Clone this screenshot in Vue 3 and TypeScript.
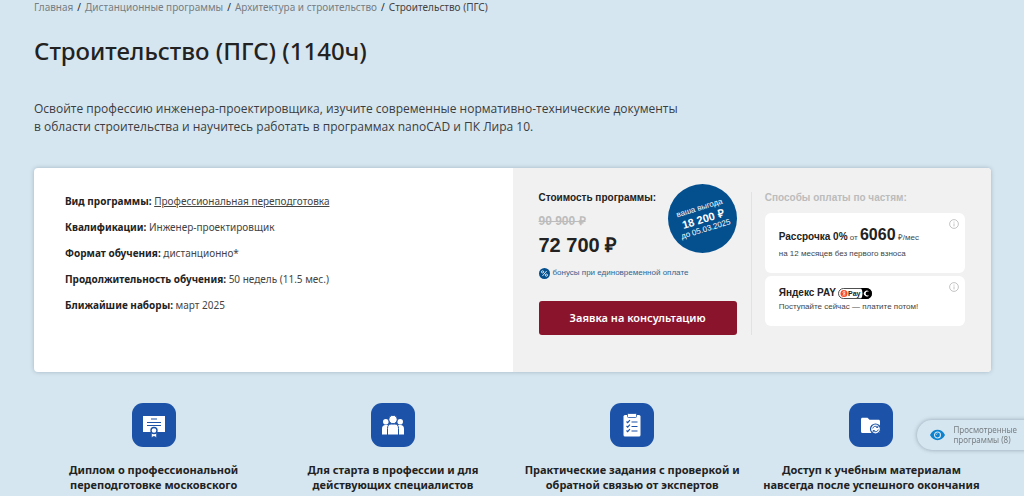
<script setup lang="ts">
interface Crumb { label: string; current?: boolean }
interface Fact { label: string; value: string; link?: boolean }
interface Feature { icon: 'diploma' | 'people' | 'tasks' | 'folder'; lines: string[] }

const crumbs: Crumb[] = [
  { label: 'Главная' },
  { label: 'Дистанционные программы' },
  { label: 'Архитектура и строительство' },
  { label: 'Строительство (ПГС)', current: true },
]

const facts: Fact[] = [
  { label: 'Вид программы:', value: 'Профессиональная переподготовка', link: true },
  { label: 'Квалификации:', value: 'Инженер-проектировщик' },
  { label: 'Формат обучения:', value: 'дистанционно*' },
  { label: 'Продолжительность обучения:', value: '50 недель (11.5 мес.)' },
  { label: 'Ближайшие наборы:', value: 'март 2025' },
]

const features: Feature[] = [
  { icon: 'diploma', lines: ['Диплом о профессиональной', 'переподготовке московского'] },
  { icon: 'people', lines: ['Для старта в профессии и для', 'действующих специалистов'] },
  { icon: 'tasks', lines: ['Практические задания с проверкой и', 'обратной связью от экспертов'] },
  { icon: 'folder', lines: ['Доступ к учебным материалам', 'навсегда после успешного окончания'] },
]
</script>

<template>
  <main class="page">
    <nav class="crumbs" aria-label="Навигация">
      <template v-for="(crumb, i) in crumbs" :key="crumb.label">
        <span v-if="i > 0" class="slash">/</span>
        <span v-if="crumb.current" class="current">{{ crumb.label }}</span>
        <a v-else href="#">{{ crumb.label }}</a>
      </template>
    </nav>

    <h1>Строительство (ПГС) (1140ч)</h1>
    <p class="lead">
      Освойте профессию инженера-проектировщика, изучите современные нормативно-технические документы<br>
      в области строительства и научитесь работать в программах nanoCAD и ПК Лира 10.
    </p>

    <section class="card">
      <div class="facts">
        <p v-for="fact in facts" :key="fact.label">
          <b>{{ fact.label }}</b>&nbsp;<a v-if="fact.link" href="#">{{ fact.value }}</a><span v-else>{{ fact.value }}</span>
        </p>
      </div>

      <div class="offer">
        <div class="price">
          <h2>Стоимость программы:</h2>
          <s>90 900 ₽</s>
          <strong class="total">72 700 ₽</strong>
          <div class="bonus">
            <svg viewBox="0 0 12 12" aria-hidden="true">
              <circle cx="6" cy="6" r="6" fill="#04508f" />
              <g fill="none" stroke="#e8f0f6" stroke-width="1">
                <path d="M8.4 3.2 3.7 8.8" />
                <circle cx="3.9" cy="4.2" r="1.2" />
                <circle cx="8.1" cy="7.8" r="1.2" />
              </g>
            </svg>
            <span>бонусы при единовременной оплате</span>
          </div>
          <button type="button" class="cta">Заявка на консультацию</button>
          <div class="badge">
            <div class="badge-text">
              <span>ваша выгода</span>
              <b>18 200 ₽</b>
              <span>до 05.03.2025</span>
            </div>
          </div>
        </div>

        <div class="parts">
          <h2>Способы оплаты по частям:</h2>
          <article class="part first">
            <p class="rate"><b>Рассрочка 0%</b> от <strong>6060</strong> ₽/мес</p>
            <p>на 12 месяцев без первого взноса</p>
            <button type="button" class="info" aria-label="Подробнее о рассрочке">
              <svg viewBox="0 0 10 10"><circle cx="5" cy="5" r="4.4" /><path d="M5 4.4v3M5 2.6v1" /></svg>
            </button>
          </article>
          <article class="part">
            <p class="pay">
              <b>Яндекс PAY</b>
              <svg class="pay-logo" viewBox="0 0 34 11" role="img" aria-label="Яндекс Pay">
                <rect x=".5" y=".5" width="33" height="10" rx="5" fill="#fff" stroke="#222" stroke-width=".8" />
                <path d="M23 0h5.5a5.5 5.5 0 0 1 0 11H23c2-3 2-8 0-11z" fill="#000" />
                <circle cx="6" cy="5.5" r="3.5" fill="#fc4822" />
                <path d="M6.8 7.8V3.3h-.7c-1.5 0-1.5 2.2 0 2.2h.7M6 5.5 4.9 7.8" fill="none" stroke="#fff" stroke-width=".7" />
                <text x="10" y="8" font-size="7" font-weight="700" fill="#222">Pay</text>
                <path d="M31 3.600a2.900 2.900 0 1 0 0 3.800h-1.500a1.900 1.900 0 0 1 0-3.800z" fill="#fff" />
                <circle cx="29.600" cy="5.500" r="1" fill="#000" />
              </svg>
            </p>
            <p>Поступайте сейчас — платите потом!</p>
            <button type="button" class="info" aria-label="Подробнее о Яндекс Pay">
              <svg viewBox="0 0 10 10"><circle cx="5" cy="5" r="4.4" /><path d="M5 4.4v3M5 2.6v1" /></svg>
            </button>
          </article>
        </div>
      </div>
    </section>

    <section class="features">
      <article v-for="feature in features" :key="feature.icon">
        <div class="tile">
          <svg v-if="feature.icon === 'diploma'" viewBox="0 0 44 44" aria-hidden="true">
            <rect x="11" y="13" width="22" height="16" fill="#fff" />
            <path d="M19 16h6M15 19.500h14M15 22.500h14" stroke="#1c53a8" stroke-width="1.200" />
            <path d="M19.500 28v6.500l2.500-1.200 2.500 1.200V28z" fill="#fff" stroke="#1c53a8" stroke-width=".6" />
            <circle cx="22" cy="27.500" r="3" fill="#fff" stroke="#1c53a8" stroke-width="1.400" />
          </svg>
          <svg v-else-if="feature.icon === 'people'" viewBox="0 0 44 44" aria-hidden="true" fill="#fff">
            <circle cx="14.800" cy="18.700" r="2.800" />
            <circle cx="29.200" cy="18.700" r="2.800" />
            <path d="M11 31.500V26c0-3 1.400-4 3.500-4H18v9.500zM33 31.500V26c0-3-1.400-4-3.500-4H26v9.500z" />
            <path d="M16.500 32V25.500c0-3.200 1.500-4.500 3.500-4.500h4c2 0 3.500 1.300 3.500 4.500V32z" stroke="#1c53a8" />
            <circle cx="22" cy="16.500" r="4.200" stroke="#1c53a8" />
          </svg>
          <svg v-else-if="feature.icon === 'tasks'" viewBox="0 0 44 44" aria-hidden="true">
            <rect x="13.500" y="12" width="17" height="21.500" rx="1.500" fill="#fff" />
            <rect x="17.500" y="10.500" width="9" height="4" rx="1" fill="#fff" stroke="#1c53a8" stroke-width=".8" />
            <path d="m16.500 18.500 1.200 1.200 2.200-2.600M16.500 23l1.200 1.200 2.200-2.600M16.500 27.500l1.200 1.200 2.200-2.600M21.500 19h6M21.500 23.500h6M21.500 28h6" fill="none" stroke="#1c53a8" stroke-width="1.200" />
          </svg>
          <svg v-else viewBox="0 0 44 44" aria-hidden="true">
            <path d="M12 16.200c0-.9.600-1.500 1.500-1.500h5l2 2h9c.9 0 1.500.6 1.500 1.500V30H13.500c-.9 0-1.500-.6-1.500-1.500z" fill="#fff" />
            <circle cx="26.500" cy="26" r="5" fill="#fff" stroke="#1c53a8" stroke-width="1.200" />
            <path d="M23.700 25.500a2.900 2.900 0 0 1 5-1.300M29.300 26.500a2.900 2.900 0 0 1-5 1.300M28.900 22.800v1.700h-1.700M24.100 29.200v-1.700h1.700" fill="none" stroke="#1c53a8" stroke-width=".9" />
          </svg>
        </div>
        <h3><template v-for="(line, i) in feature.lines" :key="line"><br v-if="i > 0">{{ line }}</template></h3>
      </article>
    </section>

    <a class="viewed" href="#">
      <svg viewBox="0 0 16 12" aria-hidden="true">
        <path d="M0 6c1.600-3.600 4.600-5.500 8-5.500S14.400 2.400 16 6c-1.600 3.600-4.600 5.500-8 5.500S1.600 9.600 0 6z" fill="#0d83cf" />
        <circle cx="8" cy="6" r="3.200" fill="#0d83cf" stroke="#d6e6f0" stroke-width="1.200" />
        <path d="M6.600 6c0-.9.600-1.500 1.500-1.500" fill="none" stroke="#d6e6f0" stroke-width=".6" />
      </svg>
      <span>Просмотренные<br>программы (8)</span>
    </a>
  </main>
</template>

<style>
body {
  margin: 0;
  background: #d6e6f0;
  overflow: hidden;
}
</style>

<style scoped>
.page {
  padding: 0 33px 0 34px;
  color: #222;
  font-family: "Noto Sans", "Open Sans", sans-serif;
}
h1, h2, h3, p {
  margin: 0;
}
button {
  border: 0;
  cursor: pointer;
}
.crumbs {
  display: flex;
  gap: 4px;
  font-size: 10px;
  line-height: 14px;
}
.crumbs a {
  color: #777e83;
  text-decoration: none;
}
.crumbs .current {
  color: #444;
}
h1 {
  margin-top: 20px;
  font-size: 24px;
  line-height: 34px;
  font-weight: 500;
}
.lead {
  margin-top: 32px;
  color: #3a3d40;
  font-family: "Open Sans", "Noto Sans", sans-serif;
  font-size: 12px;
  line-height: 18px;
}
.card {
  display: grid;
  grid-template-columns: 1fr 1fr;
  margin-top: 32px;
  border-radius: 4px;
  background: #fff;
  box-shadow: 0 0 4px rgba(60, 90, 110, .35);
}
.facts {
  display: flex;
  flex-direction: column;
  gap: 12px;
  padding: 26px 31px;
  color: #444;
  font-size: 10px;
  line-height: 14px;
}
.facts b {
  color: #222;
}
.facts a {
  color: inherit;
}
.offer {
  display: grid;
  grid-template-columns: 1fr 1fr;
  padding: 24px 26px 37px;
  border-radius: 0 4px 4px 0;
  background: #f1f1f1;
  font-family: "Liberation Sans", Arial, sans-serif;
}
.price {
  position: relative;
  display: flex;
  flex-direction: column;
  align-items: flex-start;
  padding-right: 14px;
  border-right: 1px solid #e2e2e2;
}
.offer h2 {
  font-size: 10px;
  line-height: 11px;
  font-weight: 700;
}
.price s {
  margin-top: 11px;
  color: #bcbcbc;
  font-size: 12px;
  line-height: 14px;
  font-weight: 700;
}
.total {
  margin-top: 5px;
  font-size: 20px;
  line-height: 24px;
}
.bonus {
  display: flex;
  align-items: center;
  gap: 3px;
  margin-top: 10px;
  color: #2f6594;
  font-size: 8px;
  line-height: 12px;
}
.bonus svg {
  width: 11px;
  height: 11px;
}
.cta {
  align-self: stretch;
  height: 34px;
  margin-top: 22px;
  border-radius: 3px;
  background: #8b142d;
  color: #fff;
  font: 600 11px/16px "Noto Sans", "Open Sans", sans-serif;
}
.badge {
  position: absolute;
  top: -8px;
  right: 14px;
  display: grid;
  place-items: center;
  width: 69px;
  height: 69px;
  border-radius: 50%;
  background: #04508f;
  color: #fff;
}
.badge-text {
  display: flex;
  flex-direction: column;
  align-items: center;
  font-size: 8px;
  line-height: 10px;
  white-space: nowrap;
  transform: rotate(-17deg);
}
.badge-text b {
  font-size: 11px;
  line-height: 12px;
}
.parts {
  display: flex;
  flex-direction: column;
  padding-left: 13px;
}
.parts h2 {
  margin-bottom: 10px;
  color: #bcbcbc;
}
.part {
  position: relative;
  margin-bottom: 3px;
  padding: 9px 14px 13px;
  border-radius: 6px;
  background: #fff;
  color: #444;
  font-size: 8px;
  line-height: 12px;
}
.part.first {
  padding: 12px 14px 13px;
}
.part b {
  color: #222;
  font-size: 10px;
}
.rate {
  line-height: 20px;
}
.rate strong {
  color: #222;
  font-size: 16px;
}
.pay {
  display: flex;
  align-items: center;
  gap: 2px;
  line-height: 16px;
}
.pay-logo {
  width: 34px;
  height: 11px;
}
.info {
  position: absolute;
  top: 6px;
  right: 6px;
  display: flex;
  padding: 0;
  background: none;
}
.info svg {
  width: 10px;
  height: 10px;
  fill: none;
  stroke: #b5b5b5;
  stroke-width: .8;
}
.features {
  display: grid;
  grid-template-columns: repeat(4, 1fr);
  margin-top: 31px;
  text-align: center;
}
.tile {
  width: 44px;
  height: 44px;
  margin: 0 auto;
  border-radius: 11px;
  background: #1c53a8;
}
.tile svg {
  display: block;
  width: 44px;
  height: 44px;
}
.features h3 {
  margin-top: 15px;
  font-size: 11px;
  line-height: 15px;
  font-weight: 700;
  white-space: nowrap;
}
.viewed {
  position: fixed;
  right: -20px;
  bottom: 46px;
  display: flex;
  align-items: center;
  gap: 8px;
  padding: 5px 27px 5px 13px;
  border-radius: 16px;
  background: #d6e6f0;
  box-shadow: 0 0 4px rgba(60, 80, 100, .45);
  color: #777e83;
  font-size: 8px;
  line-height: 10px;
  text-decoration: none;
}
.viewed svg {
  width: 15px;
  height: 12px;
}
</style>
